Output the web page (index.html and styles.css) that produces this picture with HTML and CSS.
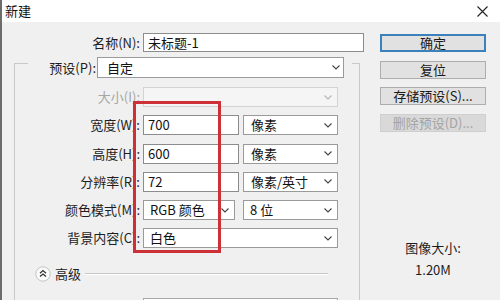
FILE: index.html
```html
<!DOCTYPE html>
<html lang="zh-CN">
<head>
<meta charset="utf-8">
<title>新建</title>
<link rel="stylesheet" href="styles.css">
</head>
<body>
<div class="window">
  <div class="titlebar">
    <span class="title">新建</span>
    <svg class="close" width="11" height="11" viewBox="0 0 11 11"><path d="M0.5 0.5L10.5 10.5M10.5 0.5L0.5 10.5" stroke="#222" stroke-width="1.1" fill="none"/></svg>
  </div>
  <div class="content">
    <div class="left">
      <div class="field-row name-row">
        <span class="lbl">名称(N):</span>
        <div class="box input name-input">未标题-1</div>
      </div>
      <div class="group">
        <div class="legend">
          <span class="lbl">预设(P):</span>
          <div class="box select preset-select"><span>自定</span><svg class="chev" width="8" height="5" viewBox="0 0 8 5"><path d="M0.5 0.5L4 4L7.5 0.5" stroke="#444" stroke-width="1.1" fill="none"/></svg></div>
        </div>
        <div class="rows">
          <div class="field-row">
            <span class="lbl disabled">大小(I):</span>
            <div class="box select wide disabled-box"><span></span><svg class="chev" width="8" height="5" viewBox="0 0 8 5"><path d="M0.5 0.5L4 4L7.5 0.5" stroke="#b5b5b5" stroke-width="1.1" fill="none"/></svg></div>
          </div>
          <div class="field-row">
            <span class="lbl">宽度(W):</span>
            <div class="box input num">700</div>
            <div class="box select unit"><span>像素</span><svg class="chev" width="8" height="5" viewBox="0 0 8 5"><path d="M0.5 0.5L4 4L7.5 0.5" stroke="#444" stroke-width="1.1" fill="none"/></svg></div>
          </div>
          <div class="field-row">
            <span class="lbl">高度(H):</span>
            <div class="box input num">600</div>
            <div class="box select unit"><span>像素</span><svg class="chev" width="8" height="5" viewBox="0 0 8 5"><path d="M0.5 0.5L4 4L7.5 0.5" stroke="#444" stroke-width="1.1" fill="none"/></svg></div>
          </div>
          <div class="field-row">
            <span class="lbl">分辨率(R):</span>
            <div class="box input num">72</div>
            <div class="box select unit"><span>像素/英寸</span><svg class="chev" width="8" height="5" viewBox="0 0 8 5"><path d="M0.5 0.5L4 4L7.5 0.5" stroke="#444" stroke-width="1.1" fill="none"/></svg></div>
          </div>
          <div class="field-row">
            <span class="lbl">颜色模式(M):</span>
            <div class="box select mode"><span>RGB 颜色</span><svg class="chev" width="8" height="5" viewBox="0 0 8 5"><path d="M0.5 0.5L4 4L7.5 0.5" stroke="#444" stroke-width="1.1" fill="none"/></svg></div>
            <div class="box select unit bits"><span>8 位</span><svg class="chev" width="8" height="5" viewBox="0 0 8 5"><path d="M0.5 0.5L4 4L7.5 0.5" stroke="#444" stroke-width="1.1" fill="none"/></svg></div>
          </div>
          <div class="field-row">
            <span class="lbl">背景内容(C):</span>
            <div class="box select wide"><span>白色</span><svg class="chev" width="8" height="5" viewBox="0 0 8 5"><path d="M0.5 0.5L4 4L7.5 0.5" stroke="#444" stroke-width="1.1" fill="none"/></svg></div>
          </div>
        </div>
        <div class="advanced">
          <svg class="adv-icon" width="16" height="16" viewBox="0 0 16 16">
            <circle cx="8" cy="8" r="7.2" fill="#fbfbfb" stroke="#c4c4c4" stroke-width="1"/>
            <path d="M5 7.2L8 4.6L11 7.2M5 10.6L8 8L11 10.6" stroke="#333" stroke-width="1.3" fill="none"/>
          </svg>
          <span class="adv-text">高级</span>
          <div class="adv-line"></div>
        </div>
        <div class="box input bottom-box"></div>
      </div>
    </div>
    <div class="right">
      <div class="buttons">
        <div class="btn primary">确定</div>
        <div class="btn">复位</div>
        <div class="btn">存储预设(S)...</div>
        <div class="btn disabled-btn">删除预设(D)...</div>
      </div>
      <div class="imgsize">
        <div>图像大小:</div>
        <div>1.20M</div>
      </div>
    </div>
  </div>
</div>
<div class="highlight"></div>
</body>
</html>
```

FILE: styles.css
```css
* { box-sizing: border-box; }

body {
  margin: 0;
  width: 500px;
  height: 300px;
  overflow: hidden;
  background: #f0f0f0;
  font-family: "Noto Sans CJK SC", "Microsoft YaHei", sans-serif;
  font-size: 13px;
  color: #1e1e1e;
}

.window {
  height: 300px;
  overflow: hidden;
  border-left: 2px solid #6c6c6c;
  display: flex;
  flex-direction: column;
}

.titlebar {
  height: 22px;
  flex: none;
  background: #ffffff;
  display: flex;
  align-items: center;
  justify-content: space-between;
  padding: 0 12px 0 3px;
}

.title {
  line-height: 22px;
  color: #111;
}

.content {
  display: flex;
  padding-top: 11px;
}

.left {
  width: 362px;
  flex: none;
}

.field-row {
  display: flex;
  align-items: center;
  height: 20px;
}

.lbl {
  text-align: right;
  white-space: nowrap;
  line-height: 20px;
  color: #1e1e1e;
}

.lbl.disabled { color: #a6a6a6; }

.box {
  height: 20px;
  background: #ffffff;
  border: 1px solid #8c8c8c;
  line-height: 18px;
  white-space: nowrap;
  color: #111;
}

.input { padding-left: 4px; }

.select {
  display: flex;
  align-items: center;
  justify-content: space-between;
  padding: 0 5px 0 6px;
  border-color: #9a9a9a;
}

.name-row { height: 19px; }
.name-row .lbl { width: 138px; margin-right: 3px; }
.name-input { width: 221px; height: 19px; line-height: 17px; }

.group {
  margin-top: 11px;
  margin-left: 12px;
  width: 346px;
  height: 237px;
  overflow: hidden;
  padding-top: 1px;
  border: 1px solid #c8c8c8;
  border-bottom: none;
  border-top: none;
  background: linear-gradient(#c8c8c8, #c8c8c8) top / 100% 1px no-repeat;
}

.legend {
  margin-top: -7px;
  margin-left: 13px;
  width: 324px;
  height: 21px;
  padding-right: 8px;
  background: #f0f0f0;
  display: flex;
  align-items: center;
}

.group { overflow: visible; }

.legend .lbl { width: 68px; margin-right: 1px; line-height: 21px; }

.preset-select {
  width: 247px;
  height: 21px;
  padding-left: 9px;
  padding-right: 3px;
}

.rows {
  display: flex;
  flex-direction: column;
  gap: 8.25px;
  margin-top: 9px;
}

.rows .lbl { width: 125px; margin-right: 3px; }

.wide { width: 195px; }
.num { width: 96px; margin-right: 4px; }
.unit { width: 95px; padding-left: 7px; }
.mode { width: 92px; margin-right: 8px; }
.bits { padding-left: 6px; }

.disabled-box {
  background: #f5f5f5;
  border-color: #d3d3d3;
}

.advanced {
  display: flex;
  align-items: center;
  height: 16px;
  margin-top: 18px;
  padding-left: 20px;
}

.adv-icon { flex: none; }

.adv-text {
  margin-left: 4px;
  line-height: 16px;
  color: #1e1e1e;
}

.adv-line {
  margin-left: 4px;
  width: 243px;
  height: 2px;
  border-top: 1px solid #c6c6c6;
  border-bottom: 1px solid #ffffff;
}

.bottom-box {
  margin-top: 16px;
  margin-left: 128px;
  width: 195px;
  height: 4px;
  border-bottom: none;
  border-color: #a8a8a8;
}

.right {
  margin-left: 16px;
  width: 106px;
  flex: none;
}

.buttons {
  margin-top: 1px;
  display: flex;
  flex-direction: column;
  gap: 8.5px;
}

.btn {
  height: 18px;
  background: #e1e1e1;
  border: 1px solid #adadad;
  text-align: center;
  line-height: 16px;
  color: #1a1a1a;
  white-space: nowrap;
}

.btn.primary {
  border: 2px solid #3b82bd;
  line-height: 14px;
}

.btn.disabled-btn {
  background: #d9d9d9;
  border-color: #cfcfcf;
  color: #a3a3a3;
}

.imgsize {
  margin-top: 105px;
  text-align: center;
  line-height: 22px;
  color: #1e1e1e;
}

.highlight {
  position: absolute;
  left: 133px;
  top: 101px;
  width: 88px;
  height: 152px;
  border: 3px solid #cd3037;
}
```
